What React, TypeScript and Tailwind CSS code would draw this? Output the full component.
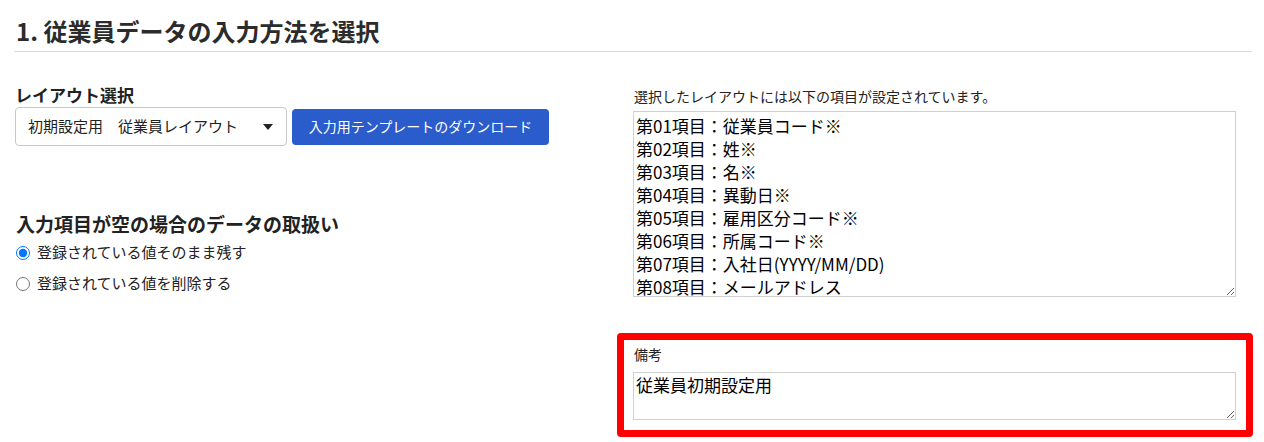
import React from "react";

const FONT = { fontFamily: '"Noto Sans CJK JP", "Noto Sans", sans-serif' };

const items = [
  "第01項目：従業員コード※",
  "第02項目：姓※",
  "第03項目：名※",
  "第04項目：異動日※",
  "第05項目：雇用区分コード※",
  "第06項目：所属コード※",
  "第07項目：入社日(YYYY/MM/DD)",
  "第08項目：メールアドレス",
];

export default function App() {
  return (
    <div className="w-[1264px] h-[442px] bg-white text-[#333] overflow-hidden" style={FONT}>
      <div className="pl-[14px] w-[1252px]">
        <div className="pt-[13px] pb-[3px] border-b border-[#dcdcdc]">
          <h1 className="text-[24px] leading-[35px] font-bold pl-[2px] text-[#2b2b2b]">1. 従業員データの入力方法を選択</h1>
        </div>
        <div className="grid grid-cols-[603px_635px]">
          {/* left column */}
          <div className="pt-[31px]">
            <div className="text-[17px] leading-[24px] font-bold text-[#222] pl-[1px]">レイアウト選択</div>
            <div className="flex items-center gap-[5px] pl-[1px]">
              <div className="w-[272px] h-[39px] border border-[#c8c8c8] rounded-[4px] flex items-center justify-between pl-[12px] pr-[13px] bg-white">
                <span className="text-[15px] text-[#222] whitespace-pre">初期設定用　従業員レイアウト</span>
                <svg width="10" height="6" viewBox="0 0 10 6" className="block">
                  <path d="M0 0 L10 0 L5 6 Z" fill="#222" />
                </svg>
              </div>
              <button className="w-[257px] h-[36px] rounded-[4px] bg-[#2a5ccb] text-white text-[14px] flex items-center justify-center">
                入力用テンプレートのダウンロード
              </button>
            </div>
            <div className="mt-[64px] text-[19px] leading-[27px] font-bold text-[#222] pl-[2px]">入力項目が空の場合のデータの取扱い</div>
            <label className="flex items-center h-[31px] pl-[2px]">
              <input type="radio" name="empty" defaultChecked className="w-[14px] h-[14px] accent-[#0075ff]" />
              <span className="ml-[7px] text-[15px] text-[#222]">登録されている値そのまま残す</span>
            </label>
            <label className="flex items-center h-[31px] pl-[2px]">
              <input type="radio" name="empty" className="w-[14px] h-[14px] accent-[#0075ff]" />
              <span className="ml-[7px] text-[15px] text-[#222]">登録されている値を削除する</span>
            </label>
          </div>
          {/* right column */}
          <div className="pl-[16px] pr-[16px] pt-[34px]">
            <div className="text-[14px] leading-[20px] text-[#222] pl-[1px]">選択したレイアウトには以下の項目が設定されています。</div>
            <textarea
              readOnly
              value={items.join("\n")}
              className="mt-[5px] block w-[603px] h-[186px] border border-[#d0d0d0] pl-[2px] pt-[2px] text-[17px] leading-[23px] text-[#000] overflow-hidden outline-none"
              style={FONT}
            />
            <div className="mt-[36px] -ml-[16px] w-[636px] border-[7px] border-[#ff0000] rounded-[4px] pl-[9px] pr-[10px] pt-[4px] pb-[10px]">
              <div className="text-[14px] leading-[20px] text-[#222] pl-[1px]">備考</div>
              <textarea
                readOnly
                value="従業員初期設定用"
                className="mt-[8px] block w-[603px] h-[48px] border border-[#d0d0d0] pl-[2px] pt-[0px] text-[17px] leading-[23px] text-[#000] overflow-hidden outline-none"
                style={FONT}
              />
            </div>
          </div>
        </div>
      </div>
    </div>
  );
}
